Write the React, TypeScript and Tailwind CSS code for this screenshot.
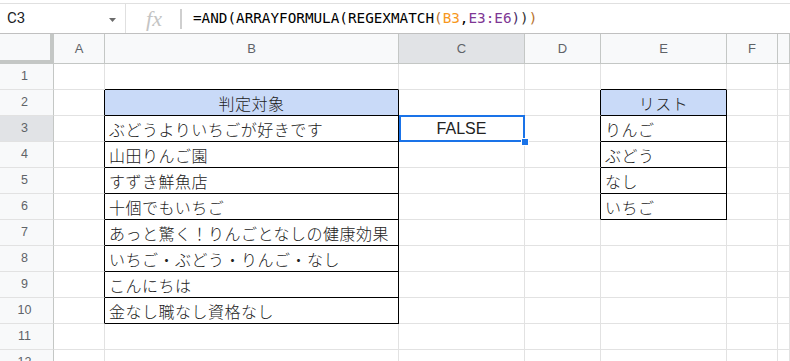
import React from "react";

// column widths in px, matching the sheet
const COLS = [
  { key: "A", w: "w-[51px]" },
  { key: "B", w: "w-[294px]" },
  { key: "C", w: "w-[126px]" },
  { key: "D", w: "w-[76px]" },
  { key: "E", w: "w-[126px]" },
  { key: "F", w: "w-[51px]" },
  { key: "G", w: "flex-1" },
];

const judged = [
  "ぶどうよりいちごが好きです",
  "山田りんご園",
  "すずき鮮魚店",
  "十個でもいちご",
  "あっと驚く！りんごとなしの健康効果",
  "いちご・ぶどう・りんご・なし",
  "こんにちは",
  "金なし職なし資格なし",
];

const list = ["りんご", "ぶどう", "なし", "いちご"];

const jp = "font-['Noto_Sans_CJK_JP','Noto_Sans',sans-serif] font-light";

function cellText(col: string, row: number): React.ReactNode {
  if (col === "B" && row === 2) return "判定対象";
  if (col === "B" && row >= 3 && row <= 10) return judged[row - 3];
  if (col === "E" && row === 2) return "リスト";
  if (col === "E" && row >= 3 && row <= 6) return list[row - 3];
  if (col === "C" && row === 3) return "FALSE";
  return null;
}

function borderR(col: string, row: number) {
  const inB = row >= 2 && row <= 10;
  const inE = row >= 2 && row <= 6;
  if ((col === "A" || col === "B") && inB) return "border-r-[#000]";
  if ((col === "D" || col === "E") && inE) return "border-r-[#000]";
  return "border-r-[#e2e2e2]";
}

function borderB(col: string, row: number) {
  if (col === "B" && row >= 1 && row <= 10) return "border-b-[#000]";
  if (col === "E" && row >= 1 && row <= 6) return "border-b-[#000]";
  return "border-b-[#e2e2e2]";
}

function Cell({ col, w, row }: { col: string; w: string; row: number }) {
  const text = cellText(col, row);
  const isHead = (col === "B" || col === "E") && row === 2;
  const isSel = col === "C" && row === 3;
  const bg = isHead ? "bg-[#c9daf8]" : "bg-white";
  const align = isHead || isSel ? "justify-center" : "justify-start";
  const font = isSel
    ? "font-['Liberation_Sans',Arial,sans-serif] text-[16px]"
    : `${jp} text-[16px] tracking-[0.5px]`;
  return (
    <div
      className={`relative ${w} shrink-0 h-full flex items-center ${align} px-[4px] border-r border-b ${borderR(col, row)} ${borderB(col, row)} ${bg} ${font} text-[#222] whitespace-nowrap overflow-visible`}
    >
      {text}
      {isSel && (
        <>
          <div className="absolute -top-px left-0 -right-px -bottom-px border-2 border-[#1a73e8] z-10" />
          <div className="absolute -right-[5px] -bottom-[5px] w-[8px] h-[8px] bg-[#1a73e8] border border-white z-20" />
        </>
      )}
    </div>
  );
}

function FormulaBar() {
  return (
    <div className="mt-[3px] h-[31px] flex items-stretch border-t border-b border-t-[#e0e0e0] border-b-[#c0c0c0] bg-white">
      <div className="w-[126px] shrink-0 flex items-center justify-between pl-[7px] pr-[9px] border-r border-[#e0e0e0]">
        <span className="font-['Roboto','Liberation_Sans',sans-serif] text-[15px] text-[#202124]">C3</span>
        <svg width="7" height="4" viewBox="0 0 7 4" className="mt-[2px]">
          <path d="M0 0 L7 0 L3.5 4 Z" fill="#6b6b6b" />
        </svg>
      </div>
      <div className="w-[54px] shrink-0 flex items-center justify-center pl-[2px]">
        <span className="font-['Liberation_Serif',serif] italic text-[22px] text-[#c4c4c4] leading-none">fx</span>
      </div>
      <div className="flex items-center">
        <div className="w-[2px] h-[20px] bg-[#cfcfcf]" />
      </div>
      <div className="flex items-center pl-[11px] font-['DejaVu_Sans_Mono',monospace] text-[14.3px] text-[#000] whitespace-nowrap">
        <span>=AND(ARRAYFORMULA(REGEXMATCH</span>
        <span className="text-[#b8732e]">(</span>
        <span className="text-[#f7981d]">B3</span>
        <span>,</span>
        <span className="text-[#7e3794]">E3:E6</span>
        <span className="text-[#4a2f6b]">)</span>
        <span className="text-[#333]">)</span>
        <span className="text-[#b8732e]">)</span>
      </div>
    </div>
  );
}

export default function App() {
  const rows = Array.from({ length: 12 }, (_, i) => i + 1);
  return (
    <div className="w-[790px] h-[361px] overflow-hidden bg-white font-['Liberation_Sans',Arial,sans-serif]">
      <FormulaBar />

      {/* column headers */}
      <div className="flex h-[30px]">
        <div className="w-[54px] shrink-0 h-full bg-[#f8f9fa] border-r-4 border-b-4 border-[#c4c7c5]" />
        {COLS.map((c) => (
          <div
            key={c.key}
            className={`${c.w} shrink-0 h-full flex items-center justify-center border-r border-b border-[#c4c7c5] text-[13px] text-[#5f6368] ${
              c.key === "C" ? "bg-[#e1e3e6]" : "bg-[#f8f9fa]"
            }`}
          >
            {c.key === "G" ? "" : c.key}
          </div>
        ))}
      </div>

      {/* body rows */}
      {rows.map((r) => (
        <div key={r} className="flex h-[26px]">
          <div
            className={`w-[54px] shrink-0 h-full flex items-center justify-center pr-[4px] border-r border-r-[#c4c7c5] border-b border-b-[#e2e2e2] text-[12.5px] text-[#5f6368] ${
              r === 3 ? "bg-[#e1e3e6]" : "bg-[#f8f9fa]"
            }`}
          >
            {r}
          </div>
          {COLS.map((c) => (
            <Cell key={c.key} col={c.key} w={c.w} row={r} />
          ))}
        </div>
      ))}
    </div>
  );
}
